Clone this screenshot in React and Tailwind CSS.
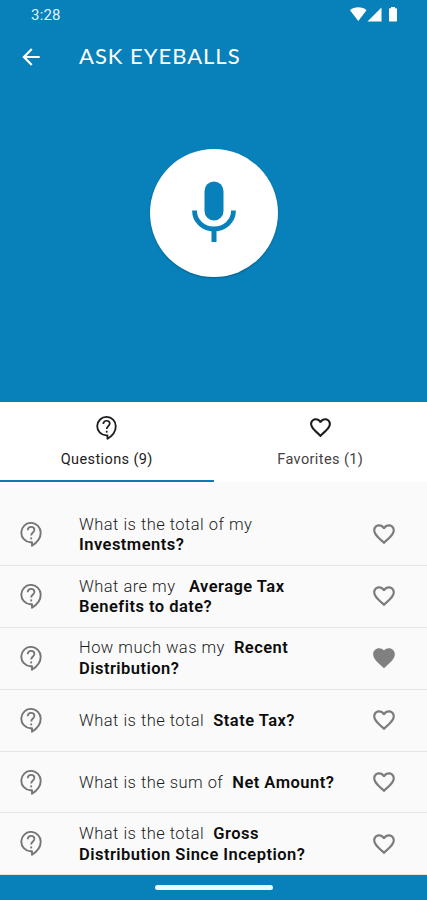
import { useState } from 'react'
import { MdArrowBack, MdFavorite, MdFavoriteBorder } from 'react-icons/md'

// each entry in lines is one line of the row: [plain text, highlighted topic]
const initialQuestions = [
  { id: 1, lines: [['What is the total of my', ''], ['', 'Investments?']], favorite: false },
  { id: 2, lines: [['What are my   ', 'Average Tax'], ['', 'Benefits to date?']], favorite: false },
  { id: 3, lines: [['How much was my  ', 'Recent'], ['', 'Distribution?']], favorite: true },
  { id: 4, lines: [['What is the total  ', 'State Tax?']], favorite: false },
  { id: 5, lines: [['What is the sum of  ', 'Net Amount?']], favorite: false },
  { id: 6, lines: [['What is the total  ', 'Gross'], ['', 'Distribution Since Inception?']], favorite: false },
]

function QuestionIcon({ className }) {
  return (
    <svg className={className} viewBox="0 0 22 25" fill="none" stroke="currentColor">
      <path
        d="M10.500 20.300A9.700 9.700 0 1 1 20.700 10.600C20.700 15.800 17.300 20.600 12 23.700V20.300z"
        strokeWidth="1.900"
        strokeLinejoin="round"
      />
      <path d="M7.700 8.300C7.700 6.100 9.200 4.900 11.100 4.900s3.300 1.200 3.300 3c0 2.500-3.200 2.800-3.200 5.700" strokeWidth="1.800" />
      <path d="M11.200 15.400v2" strokeWidth="1.800" />
    </svg>
  )
}

function StatusBar() {
  return (
    <div className="flex h-[30px] items-center justify-between pl-[31px] pr-[29px] text-[#e3f2fa]">
      <span className="text-[15px] leading-none tracking-[0.2px]">3:28</span>
      <svg className="mb-[2px]" width="48" height="15" viewBox="0 0 48 15" fill="#fff">
        <path d="M0 3.200C4.500 -0.600 12 -0.600 16.500 3.200L8.300 14z" />
        <path d="M31.500 0.500V14.500H17.500z" />
        <path d="M40 1.200h1V0h4v1.200h1c.6 0 1 .4 1 1v11.300c0 .6-.4 1-1 1h-6c-.6 0-1-.4-1-1V2.200c0-.6.4-1 1-1z" />
      </svg>
    </div>
  )
}

function MicButton() {
  return (
    <button className="flex size-[128px] items-center justify-center rounded-full bg-white pb-[3px] shadow-[0_1px_2px_rgba(0,0,0,0.25)]">
      <svg width="44" height="62" viewBox="0 0 44 62" fill="none" stroke="#0881ba">
        <rect x="12.500" y="0.500" width="19" height="39" rx="9.500" fill="#0881ba" stroke="none" />
        <path d="M2.500 29.500c0 10.500 8.700 18.500 19.500 18.500s19.500-8 19.500-18.500" strokeWidth="4.800" />
        <path d="M22 48v13" strokeWidth="5" />
      </svg>
    </button>
  )
}

function QuestionRow({ question, onToggle }) {
  return (
    <li className="flex h-[61.9px] items-center border-b border-[#e4e4e4] pl-[20px]">
      <QuestionIcon className="h-[25px] w-[22px] shrink-0 text-[#757575]" />
      <div className="ml-[37px] w-[270px] pt-[2px] text-[16.5px] leading-[20.8px] font-light tracking-[0.47px] whitespace-pre text-[#1c1c1c]">
        {question.lines.map(([text, topic]) => (
          <div key={text + topic} className="flex">
            {text && <span>{text}</span>}
            {topic && <b className="font-semibold text-[#0c0c0c]">{topic}</b>}
          </div>
        ))}
      </div>
      <button className="ml-[22px]" onClick={() => onToggle(question.id)}>
        {question.favorite ? (
          <MdFavorite className="size-[26px] text-[#808080]" />
        ) : (
          <MdFavoriteBorder className="size-[26px] text-[#7c7c7c]" />
        )}
      </button>
    </li>
  )
}

export default function App() {
  const [questions, setQuestions] = useState(initialQuestions)

  function toggleFavorite(id) {
    setQuestions(questions.map((q) => (q.id === id ? { ...q, favorite: !q.favorite } : q)))
  }

  return (
    <div className="flex h-[900px] w-[427px] flex-col overflow-hidden bg-[#fafafa] font-['Roboto',sans-serif]">
      <header className="h-[402px] shrink-0 bg-[#0881ba]">
        <StatusBar />
        <div className="flex h-[54px] items-center pl-[18px] text-white">
          <MdArrowBack className="size-[26px]" />
          <h1 className="ml-[35px] pb-[2px] font-['Lato',sans-serif] text-[22px] leading-none tracking-[1px]">
            ASK EYEBALLS
          </h1>
        </div>
        <div className="flex justify-center pt-[65px] pl-px">
          <MicButton />
        </div>
      </header>

      <nav className="flex h-[80px] shrink-0 bg-white text-[14.5px] tracking-[0.4px]">
        <button className="flex w-[213.5px] flex-col items-center border-b-2 border-[#0e79b2] pt-[14px] text-[#1c1c1c]">
          <QuestionIcon className="h-[24px] w-[21px]" />
          <span className="mt-[10px] leading-5">Questions (9)</span>
        </button>
        <button className="flex w-[213.5px] flex-col items-center pt-[13px] text-[#424242]">
          <MdFavoriteBorder className="size-[25px] text-[#1c1c1c]" />
          <span className="mt-[10px] leading-5">Favorites (1)</span>
        </button>
      </nav>

      <ul className="h-[393px] shrink-0 overflow-hidden pt-[22px]">
        {questions.map((q) => (
          <QuestionRow key={q.id} question={q} onToggle={toggleFavorite} />
        ))}
      </ul>

      <footer className="flex flex-1 justify-center bg-[#0881ba] pt-[10px]">
        <div className="h-[5px] w-[118px] rounded-full bg-[#eef8fd]" />
      </footer>
    </div>
  )
}
